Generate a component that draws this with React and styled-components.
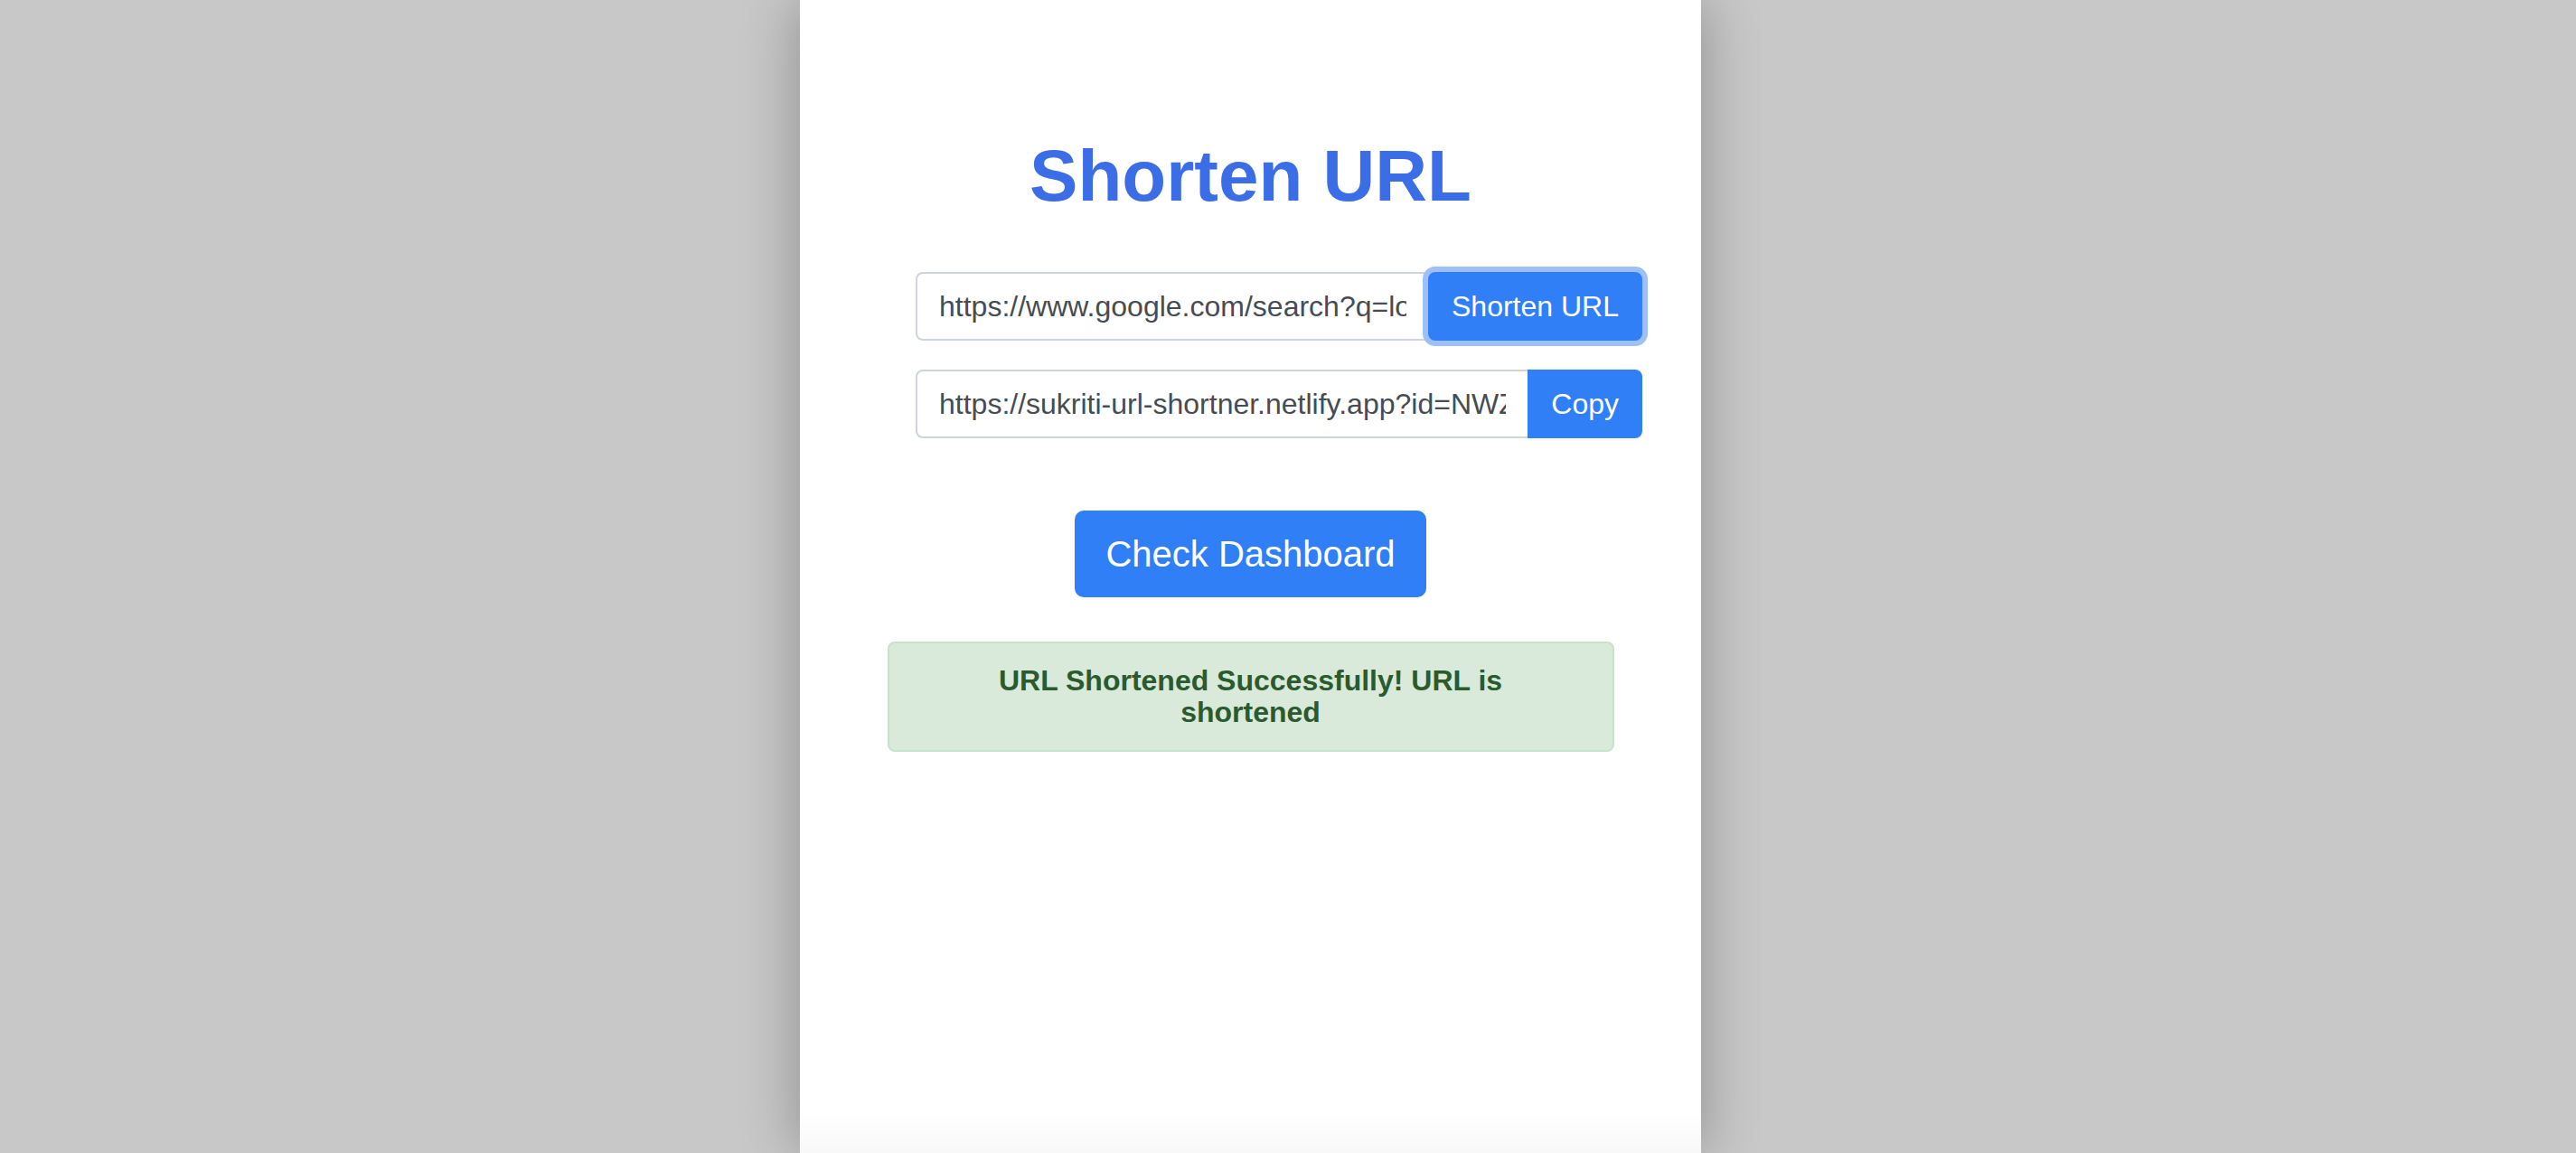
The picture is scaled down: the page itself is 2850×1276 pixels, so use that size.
import React from "react";
import styled, { createGlobalStyle } from "styled-components";

const GlobalStyle = createGlobalStyle`
  html, body {
    margin: 0;
    padding: 0;
    background: #c8c8c8;
  }
  body {
    font-family: "Liberation Sans", Arial, Helvetica, sans-serif;
  }
  * {
    box-sizing: border-box;
  }
`;

const App = () => {
  return (
    <Page>
      <GlobalStyle />
      <Card>
        <Title>Shorten URL</Title>

        <InputRow>
          <UrlInput
            readOnly
            value="https://www.google.com/search?q=long+url+example"
          />
          <Btn focused>Shorten URL</Btn>
        </InputRow>

        <InputRow>
          <UrlInput
            readOnly
            value="https://sukriti-url-shortner.netlify.app?id=NWZkMjQ1"
          />
          <Btn attached>Copy</Btn>
        </InputRow>

        <BigBtn>Check Dashboard</BigBtn>

        <Alert>URL Shortened Successfully! URL is shortened</Alert>
      </Card>
    </Page>
  );
};

export default App;

const Page = styled.div`
  display: flex;
  min-height: 100vh;
  padding-left: 885px;
`;

const Card = styled.div`
  width: 997px;
  min-height: 100vh;
  padding: 147px 96px 40px;
  display: flex;
  flex-direction: column;
  align-items: center;
  background: linear-gradient(
    to bottom,
    #ffffff 0,
    #ffffff calc(100% - 44px),
    #f8f8f8 100%
  );
  box-shadow: 0 0 60px rgba(0, 0, 0, 0.3);
`;

const Title = styled.h1`
  margin: 0 0 58px;
  font-size: 80px;
  line-height: 96px;
  font-weight: 700;
  color: #3a6de6;
`;

const InputRow = styled.div`
  display: flex;
  width: 804px;
  margin: 0 -32px 32px 32px;
  align-self: stretch;
`;

const UrlInput = styled.input`
  flex: 1;
  min-width: 0;
  height: 76px;
  padding: 12px 24px;
  font-family: inherit;
  font-size: 32px;
  line-height: 48px;
  color: #464c52;
  background: #fff;
  border: 2px solid #ced4da;
  border-radius: 8px 0 0 8px;
  outline: none;
`;

const Btn = styled.button`
  position: relative;
  z-index: 1;
  flex: none;
  height: 76px;
  padding: 12px 24px;
  margin-left: -2px;
  font-family: inherit;
  font-size: 32px;
  line-height: 48px;
  color: #fff;
  background: #307ff6;
  border: 2px solid #307ff6;
  border-radius: ${(p) => (p.attached ? "0 8px 8px 0" : "8px")};
  box-shadow: ${(p) => (p.focused ? "0 0 0 6px #9dc0f9" : "none")};
  cursor: pointer;
`;

const BigBtn = styled.button`
  margin-top: 48px;
  height: 96px;
  padding: 16px 32px;
  font-family: inherit;
  font-size: 40px;
  line-height: 60px;
  color: #fff;
  background: #307ff6;
  border: 2px solid #307ff6;
  border-radius: 10px;
  cursor: pointer;
`;

const Alert = styled.div`
  margin-top: 49px;
  width: 804px;
  padding: 24px 44px;
  font-size: 32px;
  line-height: 35px;
  font-weight: 700;
  text-align: center;
  color: #2a5a2e;
  background: #d9eadb;
  border: 2px solid #c6e2cb;
  border-radius: 8px;
`;
